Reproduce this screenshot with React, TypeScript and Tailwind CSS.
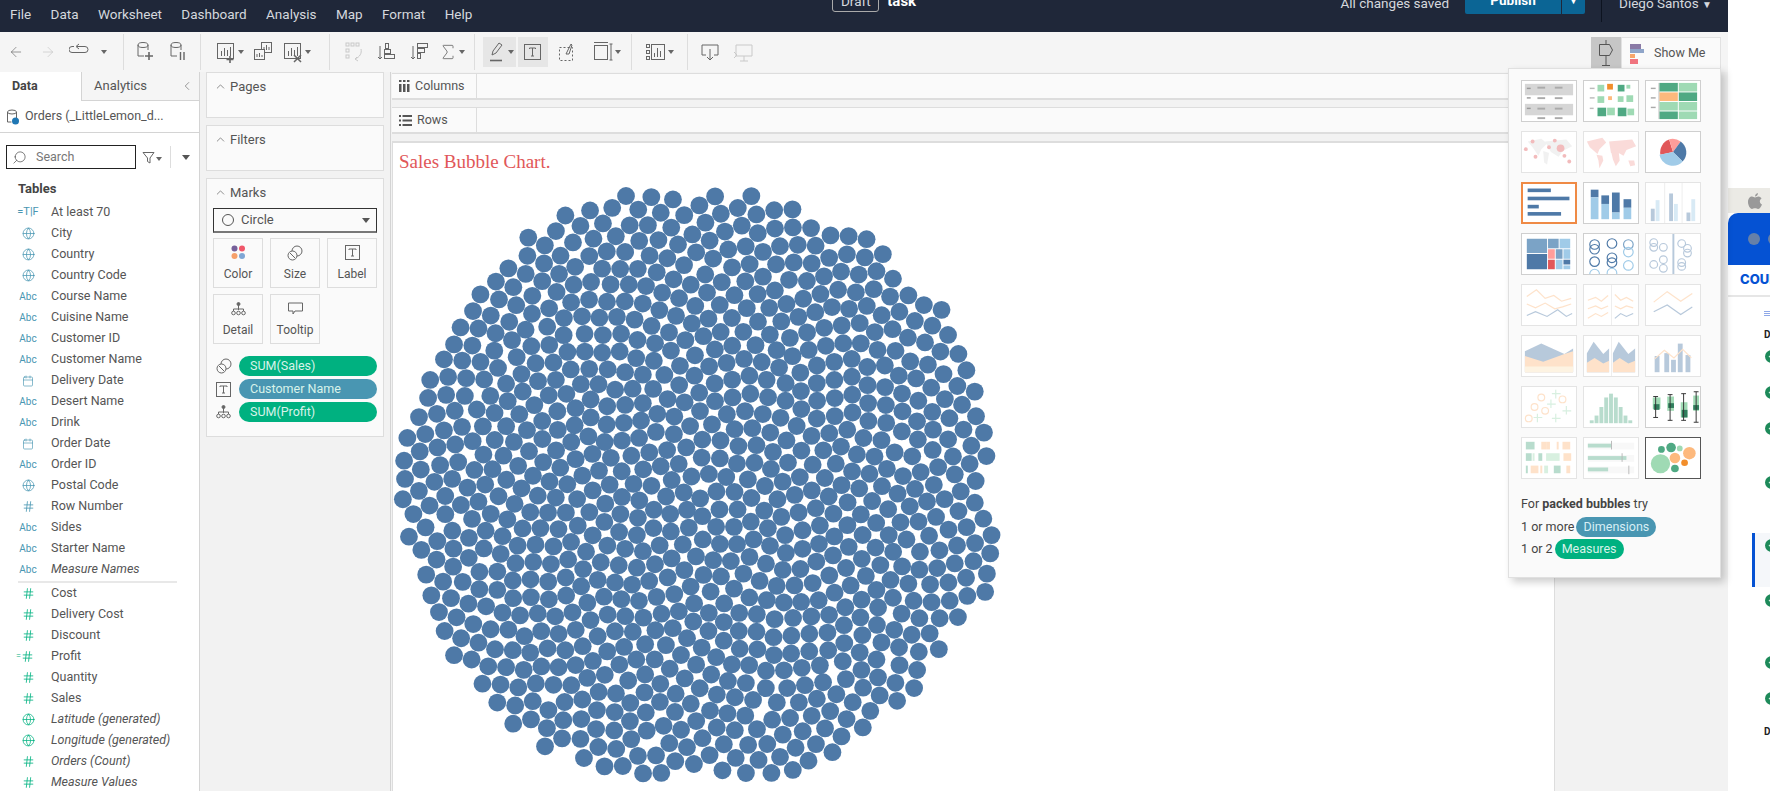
import type { ReactNode } from 'react'
import { ArrowLeft, ArrowRight, ChevronLeft, ChevronUp, Globe, Calendar, Hash, Search, Sigma } from 'lucide-react'

// packed bubbles: sunflower seed, push apart, then clip to the outline of the chart
const outline = [
  [567, 175], [600, 180], [650, 178], [700, 180], [740, 205], [770, 218], [800, 250], [835, 275], [855, 315],
  [865, 365], [877, 395], [870, 435], [875, 473], [868, 522], [835, 555], [820, 592], [790, 625], [757, 647],
  [750, 660], [700, 680], [640, 680], [545, 683], [480, 655], [440, 628], [412, 590], [385, 540], [360, 470],
  [358, 410], [365, 370], [385, 320], [400, 295], [430, 255], [460, 218], [505, 190],
].map(([x, y]) => [691 + (x * 1.1288 - 691) * 1.02, 485 + (y * 1.1288 - 485) * 1.02])

function inside(x: number, y: number) {
  let hit = false
  for (let i = 0, j = outline.length - 1; i < outline.length; j = i++) {
    const [xi, yi] = outline[i]
    const [xj, yj] = outline[j]
    if (yi > y !== yj > y && x < ((xj - xi) * (y - yi)) / (yj - yi) + xi) hit = !hit
  }
  return hit
}

function makeBubbles() {
  let seed = 17
  const rnd = () => {
    seed = (seed * 16807) % 2147483647
    return seed / 2147483647 - 0.5
  }
  const pts: { x: number; y: number }[] = []
  for (let n = 1; n < 1000; n++) {
    const r = 9.8 * Math.sqrt(n)
    const a = n * 2.39996
    pts.push({ x: 691 + r * Math.cos(a) + rnd() * 9, y: 485 + r * Math.sin(a) + rnd() * 9 })
  }
  for (let it = 0; it < 16; it++) {
    for (let i = 0; i < pts.length; i++) {
      for (let j = i + 1; j < pts.length; j++) {
        const dx = pts[j].x - pts[i].x
        const dy = pts[j].y - pts[i].y
        const d2 = dx * dx + dy * dy
        if (d2 < 335 && d2 > 0) {
          const d = Math.sqrt(d2)
          const k = ((18.3 - d) / d) * 0.5
          pts[i].x -= dx * k
          pts[i].y -= dy * k
          pts[j].x += dx * k
          pts[j].y += dy * k
        }
      }
    }
  }
  return pts.filter((p) => inside(p.x, p.y))
}

const bubbles = makeBubbles()

const caret = <span className="w-0 h-0 border-x-[3px] border-x-transparent border-t-[4px] border-t-[#666] inline-block" />

function Ico({ children, dim }: { children: ReactNode; dim?: boolean }) {
  return (
    <svg width="22" height="24" viewBox="0 0 22 24" fill="none" stroke={dim ? '#c9c9c9' : '#666'} strokeWidth="1">
      {children}
    </svg>
  )
}

function Tool({ w, children, on }: { w: number; children: ReactNode; on?: boolean }) {
  return (
    <div
      className={`h-[30px] flex items-center justify-center gap-[1px] shrink-0 ${on ? 'bg-[#e6e6e6]' : ''}`}
      style={{ width: w }}
    >
      {children}
    </div>
  )
}

const barsIco = (
  <>
    <rect x="2.5" y="3.5" width="16" height="15" />
    <path d="M6.5 16v-5M9.5 16V8M12.5 16v-6M15.5 16v-9" />
  </>
)

function Toolbar() {
  return (
    <div className="h-[40px] bg-[#f5f5f5] flex items-center text-[#666]">
      <div className="w-[124px] h-[36px] border-r border-[#ddd] flex items-center shrink-0">
        <Tool w={32}><ArrowLeft size={16} strokeWidth={1} color="#666" /></Tool>
        <Tool w={32}><ArrowRight size={16} strokeWidth={1} color="#c4c4c4" /></Tool>
        <Tool w={32}>
          <Ico><path d="M3 12.5h13a3 3 0 0 0 0-6H8M10 4 7 6.5 10 9" /><path d="M3 12.5a3 3 0 0 1 0-6h2" /></Ico>
        </Tool>
        <Tool w={16}>{caret}</Tool>
      </div>
      <div className="w-[77px] h-[36px] border-r border-[#ddd] flex items-center pl-[4px] shrink-0">
        <Tool w={33}>
          <Ico><ellipse cx="9" cy="5" rx="5" ry="2.5" /><path d="M4 5v11h6M14 5v5" /><path d="M15 12v8M11 16h8" strokeWidth="1.6" /></Ico>
        </Tool>
        <Tool w={33}>
          <Ico><ellipse cx="9" cy="5" rx="5" ry="2.5" /><path d="M4 5v11h6M14 5v5" /><path d="M13.5 12v8M17 12v8" strokeWidth="1.4" /></Ico>
        </Tool>
      </div>
      <div className="w-[129px] h-[36px] border-r border-[#ddd] flex items-center pl-[11px] shrink-0">
        <Tool w={34}><Ico>{barsIco}<path d="M15 16v7M11.5 19.5h7" strokeWidth="1.6" /></Ico>{caret}</Tool>
        <Tool w={33}>
          <Ico><rect x="9.5" y="2.5" width="10" height="10" /><path d="M12 10V7M14.5 10V5M17 10V7" /><rect x="2.5" y="9.5" width="10" height="10" fill="#f5f5f5" /><path d="M5 17v-3M7.5 17v-4M10 17v-2" /></Ico>
        </Tool>
        <Tool w={34}><Ico>{barsIco}<path d="M12 15l7 7M19 15l-7 7" strokeWidth="1.5" /></Ico>{caret}</Tool>
      </div>
      <div className="w-[145px] h-[36px] border-r border-[#ddd] flex items-center pl-[7px] shrink-0">
        <Tool w={33}>
          <Ico dim><rect x="3" y="3" width="3" height="3" /><rect x="8" y="3" width="3" height="3" /><rect x="13" y="3" width="3" height="3" /><rect x="3" y="9" width="3" height="3" /><rect x="3" y="15" width="3" height="3" /><path d="M18 9c1 4-1 8-6 10M14 17l-2 2 3 2" /></Ico>
        </Tool>
        <Tool w={33}>
          <Ico><path d="M4 6v13M2 17l2 2 2-2" /><rect x="9.5" y="3.5" width="3" height="5" /><rect x="8.5" y="9.5" width="6" height="4" /><rect x="8.5" y="14.5" width="10" height="4" /></Ico>
        </Tool>
        <Tool w={33}>
          <Ico><path d="M4 6v13M2 17l2 2 2-2" /><rect x="8.5" y="3.5" width="10" height="4" /><rect x="8.5" y="8.5" width="7" height="4" /><rect x="8.5" y="13.5" width="3" height="5" /></Ico>
        </Tool>
        <Tool w={30}><Sigma size={20} strokeWidth={1} color="#666" />{caret}</Tool>
      </div>
      <div className="w-[157px] h-[36px] border-r border-[#ddd] flex items-center pl-[8px] gap-[2px] shrink-0">
        <Tool w={33} on>
          <Ico><path d="M7 15l1-4 6-8 3 2-6 8z" /><path d="M5 20.5h12" strokeWidth="1.6" /></Ico>
          {caret}
        </Tool>
        <Tool w={30} on>
          <Ico><rect x="2.5" y="4.5" width="16" height="15" /><path d="M7.5 9V8h6v1M10.5 8v8M9 16h3" /></Ico>
        </Tool>
        <Tool w={34}>
          <Ico><rect x="3.5" y="7.5" width="13" height="13" strokeDasharray="2 2" /><path d="M10 14l5-10 1 1-3 9z" /></Ico>
        </Tool>
        <Tool w={40}>
          <Ico><rect x="2.5" y="5.5" width="13" height="14" /><path d="M2 2.5h14M19 4v16M17.5 4h3M17.5 20h3" /></Ico>
          {caret}
        </Tool>
      </div>
      <div className="w-[56px] h-[36px] border-r border-[#ddd] flex items-center justify-center shrink-0">
        <Tool w={40}>
          <Ico><rect x="1.5" y="4.5" width="3" height="3" /><rect x="1.5" y="10.5" width="3" height="3" /><rect x="1.5" y="16.5" width="3" height="3" /><rect x="6.5" y="4.5" width="13" height="15" /><path d="M9.5 17v-4M12.5 17V8M15.5 17v-6" /></Ico>
          {caret}
        </Tool>
      </div>
      <div className="flex items-center pl-[5px] shrink-0">
        <Tool w={34}>
          <Ico><path d="M3 5h16v10h-4M7 15H3V5M11 9v11M8 17l3 3 3-3" /></Ico>
        </Tool>
        <Tool w={32}>
          <Ico dim><path d="M4 5h16v11H4zM12 16v5M8 21h8M2 12l3 3-3 3" /></Ico>
        </Tool>
      </div>
      <div className="ml-auto flex items-start h-[35px] mr-[7px] self-end">
        <div className="w-[30px] h-[31px] bg-[#c6c6c6] flex items-center justify-center">
          <svg width="18" height="28" viewBox="0 0 18 28" fill="none" stroke="#555" strokeWidth="1">
            <path d="M9 1v4M9 17v9M5 26.5h8M2.5 5.5h10l3 5.5-3 5.5h-10z" />
          </svg>
        </div>
        <div className="w-[100px] h-[31px] bg-[#fafafa] border border-b-0 border-[#e2e2e2] flex items-center pl-[8px] gap-[10px] text-[12.5px] text-[#555]">
          <svg width="14" height="24" viewBox="0 0 14 24">
            <rect x="0" y="3" width="11" height="5" fill="#8a7aa6" />
            <rect x="0" y="8" width="14" height="4" fill="#8fa5c9" />
            <rect x="0" y="13" width="5" height="4" fill="#f6a56b" />
            <rect x="0" y="18" width="8" height="5" fill="#f0747f" />
          </svg>
          Show Me
        </div>
      </div>
    </div>
  )
}

type Field = { name: string; kind: string; italic?: boolean }

const dims: Field[] = [
  { name: 'At least 70', kind: 'tf' },
  { name: 'City', kind: 'geo' },
  { name: 'Country', kind: 'geo' },
  { name: 'Country Code', kind: 'geo' },
  { name: 'Course Name', kind: 'abc' },
  { name: 'Cuisine Name', kind: 'abc' },
  { name: 'Customer ID', kind: 'abc' },
  { name: 'Customer Name', kind: 'abc' },
  { name: 'Delivery Date', kind: 'date' },
  { name: 'Desert Name', kind: 'abc' },
  { name: 'Drink', kind: 'abc' },
  { name: 'Order Date', kind: 'date' },
  { name: 'Order ID', kind: 'abc' },
  { name: 'Postal Code', kind: 'geo' },
  { name: 'Row Number', kind: 'num' },
  { name: 'Sides', kind: 'abc' },
  { name: 'Starter Name', kind: 'abc' },
  { name: 'Measure Names', kind: 'abc', italic: true },
]

const measures: Field[] = [
  { name: 'Cost', kind: 'mnum' },
  { name: 'Delivery Cost', kind: 'mnum' },
  { name: 'Discount', kind: 'mnum' },
  { name: 'Profit', kind: 'calc' },
  { name: 'Quantity', kind: 'mnum' },
  { name: 'Sales', kind: 'mnum' },
  { name: 'Latitude (generated)', kind: 'mgeo', italic: true },
  { name: 'Longitude (generated)', kind: 'mgeo', italic: true },
  { name: 'Orders (Count)', kind: 'mnum', italic: true },
  { name: 'Measure Values', kind: 'mnum', italic: true },
]

function FieldIcon({ kind }: { kind: string }) {
  if (kind === 'abc') return <span className="text-[10px] text-[#4996b2]">Abc</span>
  if (kind === 'tf') return <span className="text-[11px] text-[#4996b2]">=T|F</span>
  if (kind === 'geo') return <Globe size={13} strokeWidth={1.4} color="#4996b2" />
  if (kind === 'mgeo') return <Globe size={13} strokeWidth={1.4} color="#00b180" />
  if (kind === 'date') return <Calendar size={12} strokeWidth={1.3} color="#4996b2" />
  if (kind === 'num') return <Hash size={13} strokeWidth={1.5} color="#4996b2" />
  if (kind === 'calc')
    return (
      <span className="flex items-center -ml-[6px]">
        <span className="text-[9px] leading-none text-[#00b180]">=</span>
        <Hash size={13} strokeWidth={1.5} color="#00b180" />
      </span>
    )
  return <Hash size={13} strokeWidth={1.5} color="#00b180" />
}

function FieldRow({ f }: { f: Field }) {
  return (
    <div className="h-[21px] flex items-center">
      <div className="w-[56px] flex justify-center shrink-0">
        <FieldIcon kind={f.kind} />
      </div>
      <span className={`-ml-[5px] whitespace-nowrap ${f.italic ? 'italic' : ''}`}>{f.name}</span>
    </div>
  )
}

function DataPane() {
  return (
    <div className="w-[200px] h-full bg-white border-r border-[#d4d4d4] shrink-0 text-[12.5px] text-[#555] overflow-hidden">
      <div className="h-[29px] flex">
        <div className="w-[81px] flex items-center pl-[12px] font-bold text-[#444]">Data</div>
        <div className="flex-1 flex items-center pl-[12px] pr-[5px] justify-between bg-[#f5f5f5] border-l border-b border-[#d4d4d4] text-[13px]">
          Analytics
          <ChevronLeft size={14} strokeWidth={1} color="#555" />
        </div>
      </div>
      <div className="h-[32px] border-b border-[#d4d4d4] flex items-center pl-[6px] gap-[5px]">
        <svg width="14" height="16" viewBox="0 0 14 16" fill="none" stroke="#666" strokeWidth="1">
          <ellipse cx="6" cy="3" rx="4.5" ry="2" />
          <path d="M1.5 3v10h4M10.500 3v6" />
          <circle cx="9.5" cy="12" r="3.5" fill="#1f77b4" stroke="none" />
        </svg>
        <span className="whitespace-nowrap">Orders (_LittleLemon_d...</span>
      </div>
      <div className="flex items-center pl-[6px] mt-[12px]">
        <div className="w-[130px] h-[24px] border border-[#222] flex items-center pl-[5px] gap-[9px] text-[#777]">
          <Search size={15} strokeWidth={1} color="#333" className="-scale-x-100" />
          Search
        </div>
        <svg className="ml-[6px]" width="13" height="13" viewBox="0 0 13 13" fill="none" stroke="#666">
          <path d="M1 1.5h11L8 7v5L5.500 10.500V7z" />
        </svg>
        <span className="ml-[1px]">{caret}</span>
        <div className="w-px h-[22px] bg-[#ddd] ml-[8px]" />
        <span className="ml-[11px] w-0 h-0 border-x-[4px] border-x-transparent border-t-[5px] border-t-[#555]" />
      </div>
      <div className="pl-[18px] mt-[10px] h-[20px] flex items-center font-bold text-[#444] text-[13px]">Tables</div>
      <div className="mt-[3px]">
        {dims.map((f) => <FieldRow key={f.name} f={f} />)}
      </div>
      <div className="ml-[18px] mr-[22px] h-[2px] bg-[#e8e8e8] my-[0.5px]" />
      {measures.map((f) => <FieldRow key={f.name} f={f} />)}
    </div>
  )
}

function MarkBtn({ label, children }: { label: string; children: ReactNode }) {
  return (
    <div className="h-[50px] border border-[#ddd] bg-[#fafafa] flex flex-col items-center justify-center gap-[3px] text-[12px]">
      <div className="h-[18px] flex items-center">{children}</div>
      {label}
    </div>
  )
}

const sizeIco = (
  <svg width="16" height="16" viewBox="0 0 16 16" fill="none" stroke="#666" strokeWidth="1">
    <circle cx="10" cy="6" r="5" />
    <circle cx="5.500" cy="10.500" r="4.500" fill="#fafafa" />
    <path d="M3 8l5 5" />
  </svg>
)
const labelIco = (
  <svg width="15" height="15" viewBox="0 0 15 15" fill="none" stroke="#666" strokeWidth="1">
    <rect x="0.500" y="0.500" width="14" height="14" />
    <path d="M4 5V4h7v1M7.500 4v7M6 11h3" />
  </svg>
)
const detailIco = (
  <svg width="15" height="14" viewBox="0 0 15 14" fill="none" stroke="#666" strokeWidth="1">
    <circle cx="7.500" cy="2" r="1.500" fill="#666" />
    <path d="M7.500 3v5M2.500 9V7h10v2" />
    <circle cx="2.500" cy="11" r="1.800" />
    <circle cx="7.500" cy="11" r="1.800" />
    <circle cx="12.500" cy="11" r="1.800" />
  </svg>
)

function Pill({ color, children }: { color: string; children: ReactNode }) {
  return (
    <div className={`h-[20px] flex-1 rounded-full flex items-center px-[11px] text-[12.5px] text-[#d8f3ea] whitespace-nowrap ${color}`}>
      {children}
    </div>
  )
}

function Card({ title, className, children }: { title: string; className: string; children?: ReactNode }) {
  return (
    <div className={`bg-[#fafafa] border border-[#ddd] ${className}`}>
      <div className="h-[27px] flex items-center pl-[7px] gap-[3px]">
        <ChevronUp size={13} strokeWidth={1.2} color="#555" />
        {title}
      </div>
      {children}
    </div>
  )
}

function SidePane() {
  return (
    <div className="w-[191px] h-full bg-[#f2f2f2] border-r border-[#d4d4d4] shrink-0 px-[6px] flex flex-col text-[13px] text-[#555] overflow-hidden">
      <Card title="Pages" className="h-[46px] mb-[7px]" />
      <Card title="Filters" className="h-[46px] mb-[7px]" />
      <Card title="Marks" className="h-[259px]">
        <div className="mx-[6px] mt-[2px] h-[25px] border border-[#333] border-b-2 border-b-[#777] flex items-center pl-[8px] gap-[7px]">
          <span className="w-[12px] h-[12px] rounded-full border border-[#555]" />
          Circle
          <span className="ml-auto mr-[6px] w-0 h-0 border-x-[4px] border-x-transparent border-t-[5px] border-t-[#555]" />
        </div>
        <div className="mx-[6px] mt-[5px] grid grid-cols-3 gap-x-[7px] gap-y-[6px]">
          <MarkBtn label="Color">
            <svg width="15" height="15" viewBox="0 0 15 15">
              <circle cx="3.500" cy="3.500" r="3" fill="#76609a" />
              <circle cx="11" cy="3.500" r="3" fill="#f0576a" />
              <circle cx="3.500" cy="11" r="3" fill="#f6a06a" />
              <circle cx="11" cy="11" r="3" fill="#7ea6d5" />
            </svg>
          </MarkBtn>
          <MarkBtn label="Size">{sizeIco}</MarkBtn>
          <MarkBtn label="Label">{labelIco}</MarkBtn>
          <MarkBtn label="Detail">{detailIco}</MarkBtn>
          <MarkBtn label="Tooltip">
            <svg width="15" height="14" viewBox="0 0 15 14" fill="none" stroke="#666" strokeWidth="1">
              <path d="M0.500 1h14v8H7l-2 3V9H0.500z" />
            </svg>
          </MarkBtn>
        </div>
        <div className="mt-[12px] pl-[9px] pr-[6px] flex flex-col gap-[3px]">
          <div className="flex items-center gap-[7px]"><div className="w-[16px]">{sizeIco}</div><Pill color="bg-[#00b180]">SUM(Sales)</Pill></div>
          <div className="flex items-center gap-[7px]"><div className="w-[16px]">{labelIco}</div><Pill color="bg-[#4996b2]">Customer Name</Pill></div>
          <div className="flex items-center gap-[7px]"><div className="w-[16px]">{detailIco}</div><Pill color="bg-[#00b180]">SUM(Profit)</Pill></div>
        </div>
      </Card>
    </div>
  )
}

function Shelf({ label, icon }: { label: string; icon: ReactNode }) {
  return (
    <div className="h-[27px] flex bg-[#fafafa] border-t border-b-2 border-[#ddd] mb-[7px] text-[12.5px] text-[#555]">
      <div className="w-[85px] border-r border-[#ddd] flex items-center pl-[7px] gap-[5px]">
        {icon}
        {label}
      </div>
    </div>
  )
}

function Thumb({ children, mode }: { children: ReactNode; mode?: 'faded' | 'sel' | 'cur' }) {
  const border =
    mode === 'sel' ? 'border-2 border-[#ef8a45]' : mode === 'cur' ? 'border border-[#555]' : mode === 'faded' ? 'border border-[#e4e4e4]' : 'border border-[#cfcfcf]'
  return (
    <div className={`w-[56px] h-[42px] bg-white overflow-hidden ${border}`}>
      <svg width="100%" height="100%" viewBox="0 0 56 42" preserveAspectRatio="none" className={mode === 'faded' ? 'opacity-40' : ''}>
        {children}
      </svg>
    </div>
  )
}

const G = '#4fa983'
const L = '#9fdab4'
const O = '#f28e2b'
const P = '#fdb97d'
const B = '#4e79a7'
const S = '#a0cbe8'

function R(x: number, y: number, w: number, h: number, fill: string) {
  return <rect x={x} y={y} width={w} height={h} fill={fill} />
}

const lineA = 'M5 12l10-7 9 9 9-3 8 6 10-3'
const lineB = 'M5 20l9 4 10-5 10 6 8-2 9-3'
const lineC = 'M5 32l9-4 12 5 11-7 9 7 6-3'

const thumbs: { mode?: 'faded' | 'sel' | 'cur'; g: ReactNode }[] = [
  { g: <>{R(3, 3, 50, 12, '#d6d6d6')}{R(3, 24, 50, 12, '#d6d6d6')}{[7, 18, 29, 39].map((y) => <g key={y}>{R(16, y - 1, 8, 2, '#aaa')}{R(34, y - 1, 8, 2, '#aaa')}</g>)}{R(5, 7, 4, 1.500, '#999')}{R(5, 17, 4, 1.500, '#999')}{R(5, 28, 4, 1.500, '#999')}</> },
  { g: <>{R(6, 7, 5, 1.500, '#bbb')}{R(6, 17, 5, 1.500, '#bbb')}{R(6, 28, 4, 1.500, '#bbb')}{R(14, 4, 7, 7, L)}{R(24, 3, 6, 6, O)}{R(35, 4, 7, 7, G)}{R(44, 4, 4, 4, L)}{R(14, 16, 7, 7, L)}{R(25, 16, 4, 4, P)}{R(35, 16, 6, 6, L)}{R(44, 15, 7, 7, L)}{R(14, 28, 9, 9, G)}{R(24, 28, 8, 8, L)}{R(35, 28, 9, 9, G)}{R(45, 29, 7, 7, L)}</> },
  { g: <>{R(13, 2, 1, 38, '#bbb')}{R(5, 7, 5, 1.500, '#aaa')}{R(5, 17, 5, 1.500, '#aaa')}{R(5, 27, 5, 1.500, '#aaa')}{R(14, 2, 19, 9, G)}{R(34, 2, 19, 9, L)}{R(14, 12, 19, 9, P)}{R(34, 12, 19, 9, G)}{R(14, 22, 19, 9, L)}{R(34, 22, 19, 9, L)}{R(14, 32, 19, 8, G)}{R(34, 32, 19, 8, L)}</> },
  { mode: 'faded', g: <><path d="M6 10l14-3 6 5-6 6-3 7-6-9zM24 10l22-2 6 7-10 5-4 6-8-5zM22 20l6 2-2 12-3-2z" fill="#ddd" />{[[4, 18, 2], [11, 10, 2], [28, 16, 2], [40, 17, 4], [44, 25, 2], [14, 26, 2], [34, 9, 2], [49, 31, 2]].map(([x, y, r]) => <circle key={x} cx={x} cy={y} r={r} fill="#e15759" />)}</> },
  { mode: 'faded', g: <path d="M3 10l16-4 4 5-7 7-2 5-8-7zM26 10l24-2 4 7-10 4-3 6-5-3-8 0zM13 24l6 1 1 5-4 8-1-8zM28 20l8 1 1 9-4 6-3-7zM46 30l6 0 1 5-5 1z" fill="#f4a6a2" /> },
  { g: <><path d="M28 21L15 24A14 14 0 0 1 24 8z" fill="#e15759" /><path d="M28 21L24 7.500A14 14 0 0 1 36 10z" fill="#ff9d9a" /><path d="M28 21L36 10A14 14 0 0 1 38 31z" fill={B} /><path d="M28 21L38 31A14 14 0 0 1 14 24z" fill={S} /></> },
  { mode: 'sel', g: <>{R(5, 5, 25, 4, B)}{R(5, 14, 45, 4, B)}{R(5, 23, 12, 4, B)}{R(5, 31, 36, 4, B)}</> },
  { g: <>{R(7, 7, 8, 8, B)}{R(7, 15, 8, 23, S)}{R(18, 13, 8, 9, B)}{R(18, 22, 8, 16, S)}{R(29, 10, 8, 21, B)}{R(29, 31, 8, 7, S)}{R(41, 17, 8, 9, B)}{R(41, 26, 8, 12, S)}</> },
  { mode: 'faded', g: <>{R(19, 0, 0.800, 42, '#ccc')}{R(37, 0, 0.800, 42, '#ccc')}{R(5, 27, 4, 13, B)}{R(10, 18, 4, 22, S)}{R(24, 11, 4, 29, B)}{R(29, 22, 4, 18, S)}{R(42, 31, 4, 9, B)}{R(47, 17, 4, 23, S)}</> },
  { g: <>{R(5, 5, 21, 15, '#7ba3c6')}{R(5, 21, 21, 16, B)}{R(27, 5, 11, 10, '#7ba3c6')}{R(39, 5, 11, 10, S)}{R(27, 16, 7, 10, '#ff9d9a')}{R(35, 16, 7, 10, '#7ba3c6')}{R(43, 16, 7, 10, S)}{R(27, 27, 7, 10, '#e15759')}{R(35, 27, 7, 10, S)}{R(43, 27, 7, 5, B)}{R(43, 33, 7, 4, S)}</> },
  { g: <g fill="none" strokeWidth="1.200">{[[11, 11, B], [11, 16, B], [11, 29, B], [29, 10, B], [29, 25, B], [29, 30, B], [46, 11, '#7ba3c6'], [46, 19, S], [46, 33, S], [29, 41, S], [11, 42, S]].map(([x, y, c]) => <circle key={`${x}-${y}`} cx={x as number} cy={y as number} r="5" stroke={c as string} />)}</g> },
  { mode: 'faded', g: <g fill="none" stroke={B} strokeWidth="1.200">{R(28, 0, 0.800, 42, '#ccc')}{[[8, 9], [8, 14], [18, 14], [18, 27], [18, 36], [37, 10], [43, 15], [43, 20], [37, 30], [37, 34], [8, 32]].map(([x, y]) => <circle key={`${x}-${y}`} cx={x} cy={y} r="4" />)}</g> },
  { mode: 'faded', g: <g fill="none" strokeWidth="1.200"><path d={lineA} stroke={P} /><path d={lineB} stroke={P} /><path d={lineC} stroke={B} /></g> },
  { mode: 'faded', g: <g fill="none" strokeWidth="1.200">{R(28, 0, 0.800, 42, '#ccc')}<path d="M4 16l8-3 6 4 7-6M4 25l8-3 6 3 7-3M4 35l8-5 6 3 7-4" stroke={P} /><path d="M32 10l6 6 6-3 7 4M32 22l6 3 6-3 7 2" stroke={P} /><path d="M32 35l6-5 6 3 7-3" stroke={B} /></g> },
  { mode: 'faded', g: <g fill="none" strokeWidth="1.200"><path d="M8 18l14-11 14 10 12-8" stroke={P} /><path d="M8 28l14-7 14 10 12-8" stroke={B} /></g> },
  { mode: 'faded', g: <><path d="M3 16L20 8l24 11 9-6v25H3z" fill={B} /><path d="M3 21l19 6 22-8 9-3v22H3z" fill={P} /><path d="M3 32h50v6H3z" fill="#fbe3b8" /></> },
  { mode: 'faded', g: <>{R(28, 0, 0.800, 42, '#ccc')}<path d="M3 18l7-12 10 13 6-6v25H3z" fill={B} /><path d="M3 28l8-5 9 6 6-3v12H3z" fill={P} /><path d="M30 18l6-12 10 13 7-6v25H30z" fill={B} /><path d="M30 28l7-5 9 6 7-3v12H30z" fill={P} /></> },
  { mode: 'faded', g: <>{R(9, 21, 5, 17, B)}{R(19, 18, 5, 20, B)}{R(26, 25, 5, 13, B)}{R(33, 8, 5, 30, B)}{R(41, 20, 5, 18, B)}<path d="M9 24l10-9 10 8 9-9 9 9" fill="none" stroke={P} strokeWidth="1.200" /></> },
  { mode: 'faded', g: <g fill="none" strokeWidth="1.200"><g stroke={P}><circle cx="20" cy="11" r="3.500" /><circle cx="42" cy="13" r="3.500" /><circle cx="13" cy="21" r="3.500" /><circle cx="24" cy="25" r="3.500" /><circle cx="7" cy="33" r="3.500" /></g><path d="M35 3v9M31 7h9M30 13v9M26 18h9M46 20v9M42 25h9M16 28v9M12 32h9M35 28v9M31 33h9" stroke={L} /></g> },
  { mode: 'faded', g: <>{[[6, 3], [11, 8], [16, 17], [21, 27], [26, 31], [31, 27], [36, 17], [41, 8], [46, 3]].map(([x, h]) => <g key={x}>{R(x, 38 - h, 4, h, G)}</g>)}</> },
  { g: <>{R(7, 11, 8, 12, L)}{R(8, 18, 6, 6, '#2f7d5c')}{R(22, 10, 7, 15, L)}{R(23, 17, 6, 5, '#2f7d5c')}{R(36, 16, 7, 16, L)}{R(37, 24, 6, 8, '#2f7d5c')}{R(49, 9, 6, 16, L)}{R(49, 19, 6, 5, '#2f7d5c')}<g fill="none" stroke="#333" strokeWidth="1"><path d="M10 10v22M7.500 10h5M7.500 32h5M25 8v27M22.500 8h5M22.500 35h5M39 7v28M36.500 7h5M36.500 35h5M52 5v32M49.500 5h5M49.500 37h5" /></g></> },
  { mode: 'faded', g: <>{[[4, 4, 9, 8, G], [20, 4, 5, 8, P], [25, 4, 4, 8, P], [36, 4, 2, 8, P], [42, 4, 8, 8, P], [4, 16, 6, 8, G], [11, 16, 2, 8, L], [17, 16, 4, 8, G], [25, 16, 14, 8, L], [43, 16, 8, 8, P], [4, 29, 2, 8, G], [9, 29, 8, 8, P], [19, 29, 2, 8, P], [23, 29, 4, 8, L], [33, 29, 7, 8, G], [46, 29, 4, 8, P]].map(([x, y, w, h, c], i) => <g key={i}>{R(x as number, y as number, w as number, h as number, c as string)}</g>)}</> },
  { mode: 'faded', g: <>{R(4, 5, 48, 7, '#eee')}{R(4, 18, 48, 7, '#eee')}{R(4, 30, 48, 7, '#eee')}{R(4, 6, 25, 4, G)}{R(4, 19, 40, 4, G)}{R(4, 31, 21, 4, G)}{R(28, 3, 1, 9, '#555')}{R(39, 16, 1, 9, '#555')}{R(46, 29, 1, 9, '#555')}</> },
  { mode: 'cur', g: <><circle cx="15" cy="27" r="10" fill={L} /><circle cx="16" cy="12" r="3.500" fill={G} /><circle cx="26" cy="10" r="5" fill={G} /><circle cx="35" cy="11" r="3" fill={L} /><circle cx="30" cy="21" r="5.500" fill={P} /><circle cx="45" cy="16" r="6.500" fill={P} /><circle cx="40" cy="26" r="3.500" fill={O} /><circle cx="30" cy="32" r="4" fill={G} /></> },
]

function ShowMe() {
  return (
    <div className="absolute left-[1117px] -top-[4px] w-[213px] h-[510px] bg-[#fafafa] border border-[#e0e0e0] shadow-[4px_4px_8px_rgba(0,0,0,0.2)] pt-[11px] pl-[12px] text-[12.500px] text-[#444] overflow-hidden">
      <div className="grid grid-cols-[56px_56px_56px] gap-x-[6px] gap-y-[9px]">
        {thumbs.map((t, i) => <Thumb key={i} mode={t.mode}>{t.g}</Thumb>)}
      </div>
      <p className="mt-[16px] h-[18px] leading-[18px]">For <b>packed bubbles</b> try</p>
      <div className="mt-[4px] flex items-center gap-[1px] h-[20px]">
        1 or more
        <span className="ml-[1px] h-[20px] w-[80px] rounded-full bg-[#4996b2] text-[#d8eef5] flex items-center justify-center">Dimensions</span>
      </div>
      <div className="mt-[2px] flex items-center gap-[1px] h-[20px]">
        1 or 2
        <span className="ml-[1px] h-[20px] w-[69px] rounded-full bg-[#00b180] text-[#d8f3ea] flex items-center justify-center">Measures</span>
      </div>
    </div>
  )
}

function Workspace() {
  return (
    <div className="flex-1 relative bg-[#f2f2f2] pl-[1px] pt-[1px] min-w-0">
      <div className="w-[1163px]">
        <Shelf
          label="Columns"
          icon={<svg width="11" height="12" viewBox="0 0 11 12" fill="#555"><path d="M0 4h2.500v8H0zM4 4h2.500v8H4zM8 4h2.500v8H8zM0 0h2.500v2H0zM4 0h2.500v2H4zM8 0h2.500v2H8z" /></svg>}
        />
        <Shelf
          label="Rows"
          icon={<svg width="13" height="11" viewBox="0 0 13 11" fill="#555"><path d="M0 0h2v2H0zM3.500 0H13v2H3.500zM0 4.500h2v2H0zM3.500 4.500H13v2H3.500zM0 9h2v2H0zM3.500 9H13v2H3.500z" /></svg>}
        />
        <div className="bg-white border-t-2 border-l border-r border-[#ddd] h-[660px] overflow-hidden">
          <div className="h-[40px] pl-[6px] pt-[6px] text-[19px] leading-[26px] text-[#e15759] font-['Liberation_Serif',serif]">Sales Bubble Chart.</div>
          <svg className="block" width="1160" height="610" viewBox="392 183 1160 610">
            {bubbles.map((b, i) => <circle key={i} cx={b.x} cy={b.y} r="8.900" fill="#4e79a7" />)}
          </svg>
        </div>
      </div>
      <ShowMe />
    </div>
  )
}

function Header() {
  return (
    <div className="h-[32px] bg-[#1f2739] flex items-start text-[13.500px] text-[#d5d8de] overflow-hidden">
      <nav className="flex gap-[19.4px] pl-[10px] pt-[4px] h-[20px] leading-[20px] shrink-0">
        {['File', 'Data', 'Worksheet', 'Dashboard', 'Analysis', 'Map', 'Format', 'Help'].map((m) => <span key={m}>{m}</span>)}
      </nav>
      <div className="ml-[360px] -mt-[10px] flex items-center gap-[8px]">
        <span className="border border-[#aaa] rounded-[3px] h-[21px] w-[47px] flex items-center justify-center">Draft</span>
        <b className="text-white text-[15px]">task</b>
      </div>
      <div className="ml-auto -mt-[14px] flex items-start pr-[16px]">
        <span className="mt-[7px] leading-[20px] mr-[16px]">All changes saved</span>
        <div className="flex h-[28px] rounded-[2px] bg-[#0b6595] text-white font-bold">
          <div className="w-[97px] flex items-center justify-center border-r border-[#1f2739]">Publish</div>
          <div className="w-[23px] flex items-center justify-center text-[10px]">▼</div>
        </div>
        <div className="w-px h-[36px] bg-[#0d1320] ml-[16px] mr-[17px]" />
        <span className="mt-[7px] leading-[20px] whitespace-nowrap">Diego Santos <span className="text-[10px]">▼</span></span>
      </div>
    </div>
  )
}

function Check() {
  return (
    <div className="w-[13px] h-[13px] rounded-full bg-[#1e8a5a] flex items-center justify-center shrink-0">
      <svg width="8" height="8" viewBox="0 0 8 8" fill="none" stroke="#d6f0e2" strokeWidth="1.200"><path d="M1 3l3 3 3-3" /></svg>
    </div>
  )
}

// the window of another app, cut off by the right edge of the screen
function SideWindow() {
  const gaps = [0, 23, 23, 41, 50, 42, 49, 23]
  return (
    <div className="w-[42px] h-full bg-white shrink-0 overflow-hidden">
      <div className="mt-[188px] h-[25px] bg-[#ebeae5] flex items-center pl-[20px]">
        <svg width="14" height="16" viewBox="0 0 14 16" fill="#999"><path d="M10 0c0 2-1.500 3.500-3 3.500C7 1.500 8.500 0.300 10 0zM7 4.500c1 0 2-1 3.500-1 1.500 0 2.500 1 3 2-2.500 1.500-2 5 .500 6-1 2.500-2.500 4.500-4 4.500-1 0-1.500-.700-3-.700s-2 .700-3 .700C2 16 0 12 0 9c0-3.500 2-5.500 4-5.500 1.300 0 2.200 1 3 1z" /></svg>
      </div>
      <div className="h-[52px] bg-[#0552d3] rounded-tl-[10px] flex items-center pl-[20px] gap-[8px]">
        <span className="w-[12px] h-[12px] rounded-full bg-[#6680a8] shrink-0" />
        <span className="w-[12px] h-[12px] rounded-full bg-[#6680a8] shrink-0" />
      </div>
      <div className="h-[32px] flex items-center pl-[12px] border-b-2 border-[#e6e6e6] text-[13px] font-extrabold text-[#0552d3] font-['Inter',sans-serif]">COURSE</div>
      <div className="mt-[14px] ml-[36px] w-[6px] flex flex-col gap-[1px]">
        <span className="h-px bg-[#8fa8e8]" /><span className="h-px bg-[#8fa8e8]" /><span className="h-px bg-[#8fa8e8]" />
      </div>
      <div className="ml-[36px] mt-[12px] h-[14px] leading-[14px] text-[10px] font-bold text-[#222]">D</div>
      <div className="relative ml-[24px] mt-[8px]">
        {/* section of the list: current lesson has a blue rule */}
        <div className="absolute left-0 top-[183px] w-[18px] h-[54px] bg-[#f5f7fa] border-l-[3px] border-[#0552d3]" />
        <div className="relative pl-[13px]">
          {gaps.map((g, i) => <div key={i} style={{ marginTop: i === 0 ? 0 : g }}><Check /></div>)}
        </div>
      </div>
      <div className="ml-[36px] mt-[20px] h-[14px] leading-[14px] text-[10px] font-bold text-[#222]">D</div>
    </div>
  )
}

export default function App() {
  return (
    <div className="w-[1770px] h-[791px] flex overflow-hidden bg-white font-['Roboto',sans-serif]">
      <div className="w-[1728px] h-full flex flex-col shrink-0">
        <Header />
        <Toolbar />
        <div className="flex-1 flex min-h-0 bg-[#f2f2f2]">
          <DataPane />
          <SidePane />
          <Workspace />
        </div>
      </div>
      <SideWindow />
    </div>
  )
}
